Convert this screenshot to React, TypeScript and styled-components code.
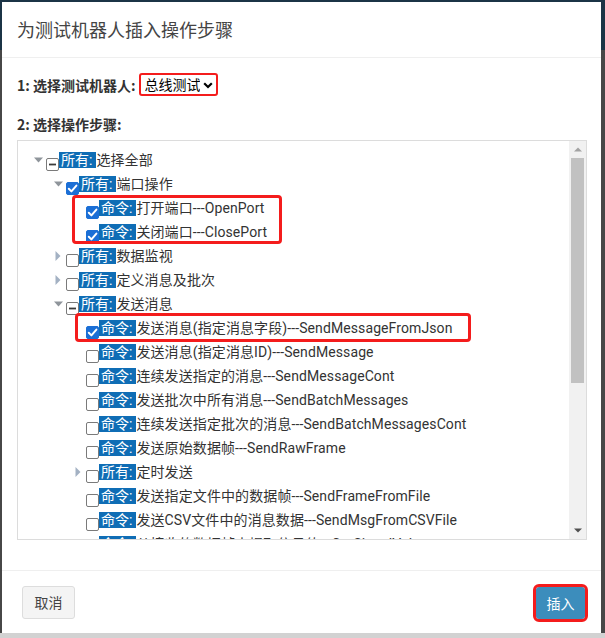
import React from 'react';
import styled, { createGlobalStyle, css } from 'styled-components';

const CJK = `"Noto Sans CJK SC", "Noto Sans", sans-serif`;
const TREE_FONT = `Roboto, "Noto Sans CJK SC", sans-serif`;

const GlobalStyle = createGlobalStyle`
  html, body { margin: 0; padding: 0; }
  body {
    width: 605px;
    height: 638px;
    overflow: hidden;
    background: linear-gradient(to bottom, #1b3446 0, #1b3446 50px, #474747 50px, #474747 633px, #d2d2d2 633px);
    font-family: ${CJK};
  }
`;

const Dialog = styled.div`
  margin: 2px 0 0 2px;
  width: 599px;
  height: 631px;
  background: #fff;
  display: flex;
  flex-direction: column;
`;

const Header = styled.div`
  box-sizing: border-box;
  height: 56px;
  padding: 15px 15px 0;
  border-bottom: 1px solid #efefef;
`;

const Title = styled.h4`
  margin: 0;
  font: 400 18px/24px ${CJK};
  color: #444;
`;

const Body = styled.div`
  box-sizing: border-box;
  height: 512px;
  padding: 15px 14px 30px 15px;
  display: flex;
  flex-direction: column;
`;

const FieldRow = styled.div`
  display: flex;
  align-items: center;
  height: 23px;
`;

const FieldLabel = styled.label<{ $gap?: number }>`
  font: 700 14px/20px ${CJK};
  color: #333;
  margin-top: ${p => p.$gap ?? 0}px;
`;

const SelectWrap = styled.span`
  position: relative;
  display: inline-flex;
  margin-left: 3px;
`;

const Select = styled.select`
  appearance: none;
  box-sizing: border-box;
  width: 79px;
  height: 23px;
  padding: 0 16px 0 4px;
  border: 2px solid #f41c1c;
  border-radius: 3px;
  background: #fff;
  color: #000;
  font: 400 14px/19px ${CJK};
  outline: none;
`;

const Chevron = styled.svg`
  position: absolute;
  right: 5px;
  top: 9px;
  pointer-events: none;
`;

const TreeBox = styled.div`
  margin-top: 6px;
  box-sizing: border-box;
  height: 400px;
  border: 1px solid #dcdcdc;
  display: flex;
`;

const TreeContent = styled.div`
  flex: 1;
  overflow: hidden;
  padding-top: 7px;
`;

const Row = styled.div<{ $level: number }>`
  display: flex;
  align-items: center;
  height: 24px;
  padding-left: ${p => 12 + p.$level * 20}px;
  white-space: nowrap;
`;

const Toggle = styled.span`
  flex: none;
  width: 16px;
  height: 100%;
  display: flex;
  align-items: center;
  justify-content: center;
`;

const Check = styled.span<{ $state: 'on' | 'off' | 'part' }>`
  flex: none;
  box-sizing: border-box;
  width: 13px;
  height: 13px;
  border-radius: 2px;
  align-self: flex-end;
  margin-bottom: 1px;
  display: flex;
  align-items: center;
  justify-content: center;
  ${p =>
    p.$state === 'on'
      ? css`background: #1b6fd6; border: 1px solid #1b6fd6;`
      : css`background: #fff; border: 1px solid #7a7a7a;`}
`;

const Tag = styled.span`
  background: #0f6db5;
  color: #fff;
  font: 400 14px/16px ${TREE_FONT};
  height: 16px;
  padding: 0 4px 0 2px;
`;

const Text = styled.span`
  color: #333;
  font: 400 14px/16px ${TREE_FONT};
  letter-spacing: 0.1px;
`;

const Mark = styled.div<{ $l: number; $t: number; $r: number; $b: number }>`
  position: relative;
  width: fit-content;
  &::after {
    content: '';
    position: absolute;
    left: ${p => p.$l}px;
    top: ${p => p.$t}px;
    right: ${p => p.$r}px;
    bottom: ${p => p.$b}px;
    border: 3px solid #f41c1c;
    border-radius: 4px;
    pointer-events: none;
  }
`;

const Scrollbar = styled.div`
  flex: none;
  width: 17px;
  background: #f1f1f1;
  display: flex;
  flex-direction: column;
`;

const ScrollBtn = styled.div`
  height: 17px;
  display: flex;
  align-items: center;
  justify-content: center;
`;

const Track = styled.div`
  flex: 1;
  padding: 0 2px;
`;

const Thumb = styled.div`
  height: 225px;
  background: #c1c1c1;
`;

const Footer = styled.div`
  box-sizing: border-box;
  height: 63px;
  border-top: 1px solid #efefef;
  padding: 0 16px 0 20px;
  display: flex;
  align-items: center;
  justify-content: space-between;
`;

const CancelButton = styled.button`
  box-sizing: border-box;
  height: 33px;
  width: 53px;
  background: #f4f4f4;
  border: 1px solid #ddd;
  border-radius: 3px;
  color: #444;
  font: 400 14px/20px ${CJK};
  padding: 0;
`;

const InsertButton = styled.button`
  box-sizing: border-box;
  height: 32px;
  width: 49px;
  background: #3c8dbc;
  border: none;
  border-radius: 3px;
  outline: 3px solid #f41c1c;
  outline-offset: 0;
  color: #fff;
  font: 400 14px/20px ${CJK};
  padding: 0;
  margin-top: 2px;
`;

type NodeT = {
  level: number;
  kind: 'all' | 'cmd';
  text: string;
  exp?: 'open' | 'closed';
  check: 'on' | 'off' | 'part';
};

type Item = { row: NodeT } | { mark: [number, number, number, number]; rows: NodeT[] };

const items: Item[] = [
  { row: { level: 0, kind: 'all', text: '选择全部', exp: 'open', check: 'part' } },
  { row: { level: 1, kind: 'all', text: '端口操作', exp: 'open', check: 'on' } },
  {
    mark: [54, -1, -15, 0],
    rows: [
      { level: 2, kind: 'cmd', text: '打开端口---OpenPort', check: 'on' },
      { level: 2, kind: 'cmd', text: '关闭端口---ClosePort', check: 'on' },
    ],
  },
  { row: { level: 1, kind: 'all', text: '数据监视', exp: 'closed', check: 'off' } },
  { row: { level: 1, kind: 'all', text: '定义消息及批次', exp: 'closed', check: 'off' } },
  { row: { level: 1, kind: 'all', text: '发送消息', exp: 'open', check: 'part' } },
  {
    mark: [57, -3, -18, -2],
    rows: [{ level: 2, kind: 'cmd', text: '发送消息(指定消息字段)---SendMessageFromJson', check: 'on' }],
  },
  { row: { level: 2, kind: 'cmd', text: '发送消息(指定消息ID)---SendMessage', check: 'off' } },
  { row: { level: 2, kind: 'cmd', text: '连续发送指定的消息---SendMessageCont', check: 'off' } },
  { row: { level: 2, kind: 'cmd', text: '发送批次中所有消息---SendBatchMessages', check: 'off' } },
  { row: { level: 2, kind: 'cmd', text: '连续发送指定批次的消息---SendBatchMessagesCont', check: 'off' } },
  { row: { level: 2, kind: 'cmd', text: '发送原始数据帧---SendRawFrame', check: 'off' } },
  { row: { level: 2, kind: 'all', text: '定时发送', exp: 'closed', check: 'off' } },
  { row: { level: 2, kind: 'cmd', text: '发送指定文件中的数据帧---SendFrameFromFile', check: 'off' } },
  { row: { level: 2, kind: 'cmd', text: '发送CSV文件中的消息数据---SendMsgFromCSVFile', check: 'off' } },
  { row: { level: 2, kind: 'cmd', text: '从接收的数据帧中提取信号值---GetSignalValue', check: 'off' } },
];

const Arrow = ({ exp }: { exp?: 'open' | 'closed' }) => {
  if (exp === 'open')
    return (
      <svg width="9" height="6" viewBox="0 0 9 6">
        <polygon points="0,0.5 9,0.5 4.5,5.5" fill="#8f959b" />
      </svg>
    );
  if (exp === 'closed')
    return (
      <svg width="6" height="10" viewBox="0 0 6 10">
        <polygon points="0.5,0 5.5,5 0.5,10" fill="#a3b1c3" />
      </svg>
    );
  return null;
};

const CheckIcon = ({ state }: { state: 'on' | 'off' | 'part' }) => {
  if (state === 'on')
    return (
      <svg width="11" height="11" viewBox="0 0 11 11">
        <path d="M1.8 5.8 L4.4 8.4 L9.4 2.6" stroke="#fff" strokeWidth="2" fill="none" strokeLinecap="round" strokeLinejoin="round" />
      </svg>
    );
  if (state === 'part')
    return (
      <svg width="11" height="11" viewBox="0 0 11 11">
        <line x1="2" y1="5.5" x2="9" y2="5.5" stroke="#3a3a3a" strokeWidth="1.8" />
      </svg>
    );
  return null;
};

const TreeRow = ({ n }: { n: NodeT }) => (
  <Row $level={n.level}>
    <Toggle>
      <Arrow exp={n.exp} />
    </Toggle>
    <Check $state={n.check}>
      <CheckIcon state={n.check} />
    </Check>
    <Tag>{n.kind === 'all' ? '所有:' : '命令:'}</Tag>
    <Text>{n.text}</Text>
  </Row>
);

export default function App() {
  return (
    <>
      <GlobalStyle />
      <Dialog>
        <Header>
          <Title>为测试机器人插入操作步骤</Title>
        </Header>
        <Body>
          <FieldRow>
            <FieldLabel>1: 选择测试机器人:</FieldLabel>
            <SelectWrap>
              <Select defaultValue="bus">
                <option value="bus">总线测试</option>
              </Select>
              <Chevron width="10" height="7" viewBox="0 0 10 7">
                <path d="M1.2 1.2 L5 5 L8.8 1.2" stroke="#000" strokeWidth="2.2" fill="none" />
              </Chevron>
            </SelectWrap>
          </FieldRow>
          <FieldLabel $gap={18}>2: 选择操作步骤:</FieldLabel>
          <TreeBox>
            <TreeContent>
              {items.map((it, i) =>
                'row' in it ? (
                  <TreeRow key={i} n={it.row} />
                ) : (
                  <Mark key={i} $l={it.mark[0]} $t={it.mark[1]} $r={it.mark[2]} $b={it.mark[3]}>
                    {it.rows.map((r, j) => (
                      <TreeRow key={j} n={r} />
                    ))}
                  </Mark>
                )
              )}
            </TreeContent>
            <Scrollbar>
              <ScrollBtn>
                <svg width="8" height="5" viewBox="0 0 8 5">
                  <polygon points="0,4.5 8,4.5 4,0.5" fill="#a3a3a3" />
                </svg>
              </ScrollBtn>
              <Track>
                <Thumb />
              </Track>
              <ScrollBtn>
                <svg width="8" height="5" viewBox="0 0 8 5">
                  <polygon points="0,0.5 8,0.5 4,4.5" fill="#505050" />
                </svg>
              </ScrollBtn>
            </Scrollbar>
          </TreeBox>
        </Body>
        <Footer>
          <CancelButton>取消</CancelButton>
          <InsertButton>插入</InsertButton>
        </Footer>
      </Dialog>
    </>
  );
}
